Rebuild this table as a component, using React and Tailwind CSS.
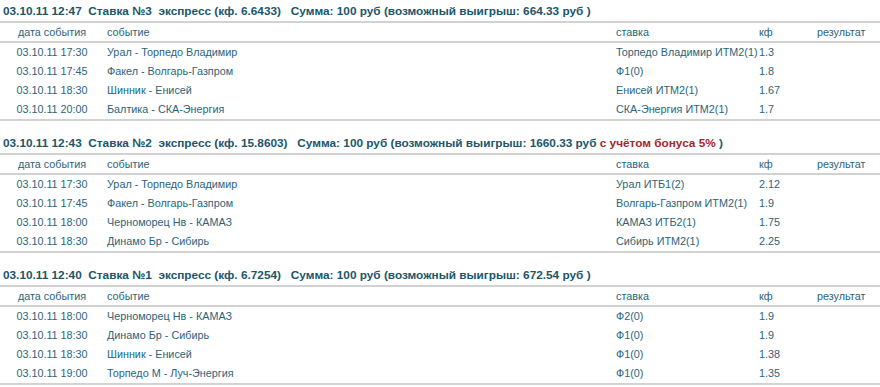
import React from "react";

const bets = [
  {
    time: "03.10.11 12:47",
    num: 3,
    kf: "6.6433",
    win: "664.33",
    bonus: false,
    rows: [
      ["03.10.11 17:30", "Урал - Торпедо Владимир", "Торпедо Владимир ИТМ2(1)", "1.3"],
      ["03.10.11 17:45", "Факел - Волгарь-Газпром", "Ф1(0)", "1.8"],
      ["03.10.11 18:30", "Шинник - Енисей", "Енисей ИТМ2(1)", "1.67"],
      ["03.10.11 20:00", "Балтика - СКА-Энергия", "СКА-Энергия ИТМ2(1)", "1.7"],
    ],
  },
  {
    time: "03.10.11 12:43",
    num: 2,
    kf: "15.8603",
    win: "1660.33",
    bonus: true,
    rows: [
      ["03.10.11 17:30", "Урал - Торпедо Владимир", "Урал ИТБ1(2)", "2.12"],
      ["03.10.11 17:45", "Факел - Волгарь-Газпром", "Волгарь-Газпром ИТМ2(1)", "1.9"],
      ["03.10.11 18:00", "Черноморец Нв - КАМАЗ", "КАМАЗ ИТБ2(1)", "1.75"],
      ["03.10.11 18:30", "Динамо Бр - Сибирь", "Сибирь ИТМ2(1)", "2.25"],
    ],
  },
  {
    time: "03.10.11 12:40",
    num: 1,
    kf: "6.7254",
    win: "672.54",
    bonus: false,
    rows: [
      ["03.10.11 18:00", "Черноморец Нв - КАМАЗ", "Ф2(0)", "1.9"],
      ["03.10.11 18:30", "Динамо Бр - Сибирь", "Ф1(0)", "1.9"],
      ["03.10.11 18:30", "Шинник - Енисей", "Ф1(0)", "1.38"],
      ["03.10.11 19:00", "Торпедо М - Луч-Энергия", "Ф1(0)", "1.35"],
    ],
  },
];

const cols = "grid grid-cols-[104px_509px_143px_58px_1fr]";

const Row = ({ cells, head }) => (
  <div className={`${cols} items-center whitespace-nowrap ${head ? "h-[20px] border-b-2 border-[#d2d2d2]" : "h-[19px]"}`}>
    <div className="text-center">{cells[0]}</div>
    <div className="pl-[3px]">{cells[1]}</div>
    <div className="pl-[3px]">{cells[2]}</div>
    <div className="pl-[3px]">{cells[3]}</div>
    <div className="pl-[3px]">{cells[4] || ""}</div>
  </div>
);

const Bet = ({ bet }) => (
  <div className="mb-[11px]">
    <div className="h-[21px] pl-[3px] pt-[4px] font-bold text-[11.8px] leading-[14px] text-[#1c5669] whitespace-pre">
      {bet.time}  Ставка №{bet.num}  экспресс (кф. {bet.kf})   Сумма: 100 руб (возможный выигрыш: {bet.win} руб{" "}
      {bet.bonus && <span className="text-[#a3262b]">с учётом бонуса 5% </span>}
      )
    </div>
    <div className="border-t-2 border-b-2 border-[#d2d2d2] text-[10.8px] text-[#2b6479]">
      <Row head cells={["дата события", "событие", "ставка", "кф", "результат"]} />
      {bet.rows.map((r, i) => (
        <Row key={i} cells={r} />
      ))}
    </div>
  </div>
);

export default function App() {
  return (
    <div className="w-[880px] h-[387px] bg-white overflow-hidden font-['Liberation_Sans',Arial,sans-serif]">
      {bets.map((b) => (
        <Bet key={b.num} bet={b} />
      ))}
    </div>
  );
}
